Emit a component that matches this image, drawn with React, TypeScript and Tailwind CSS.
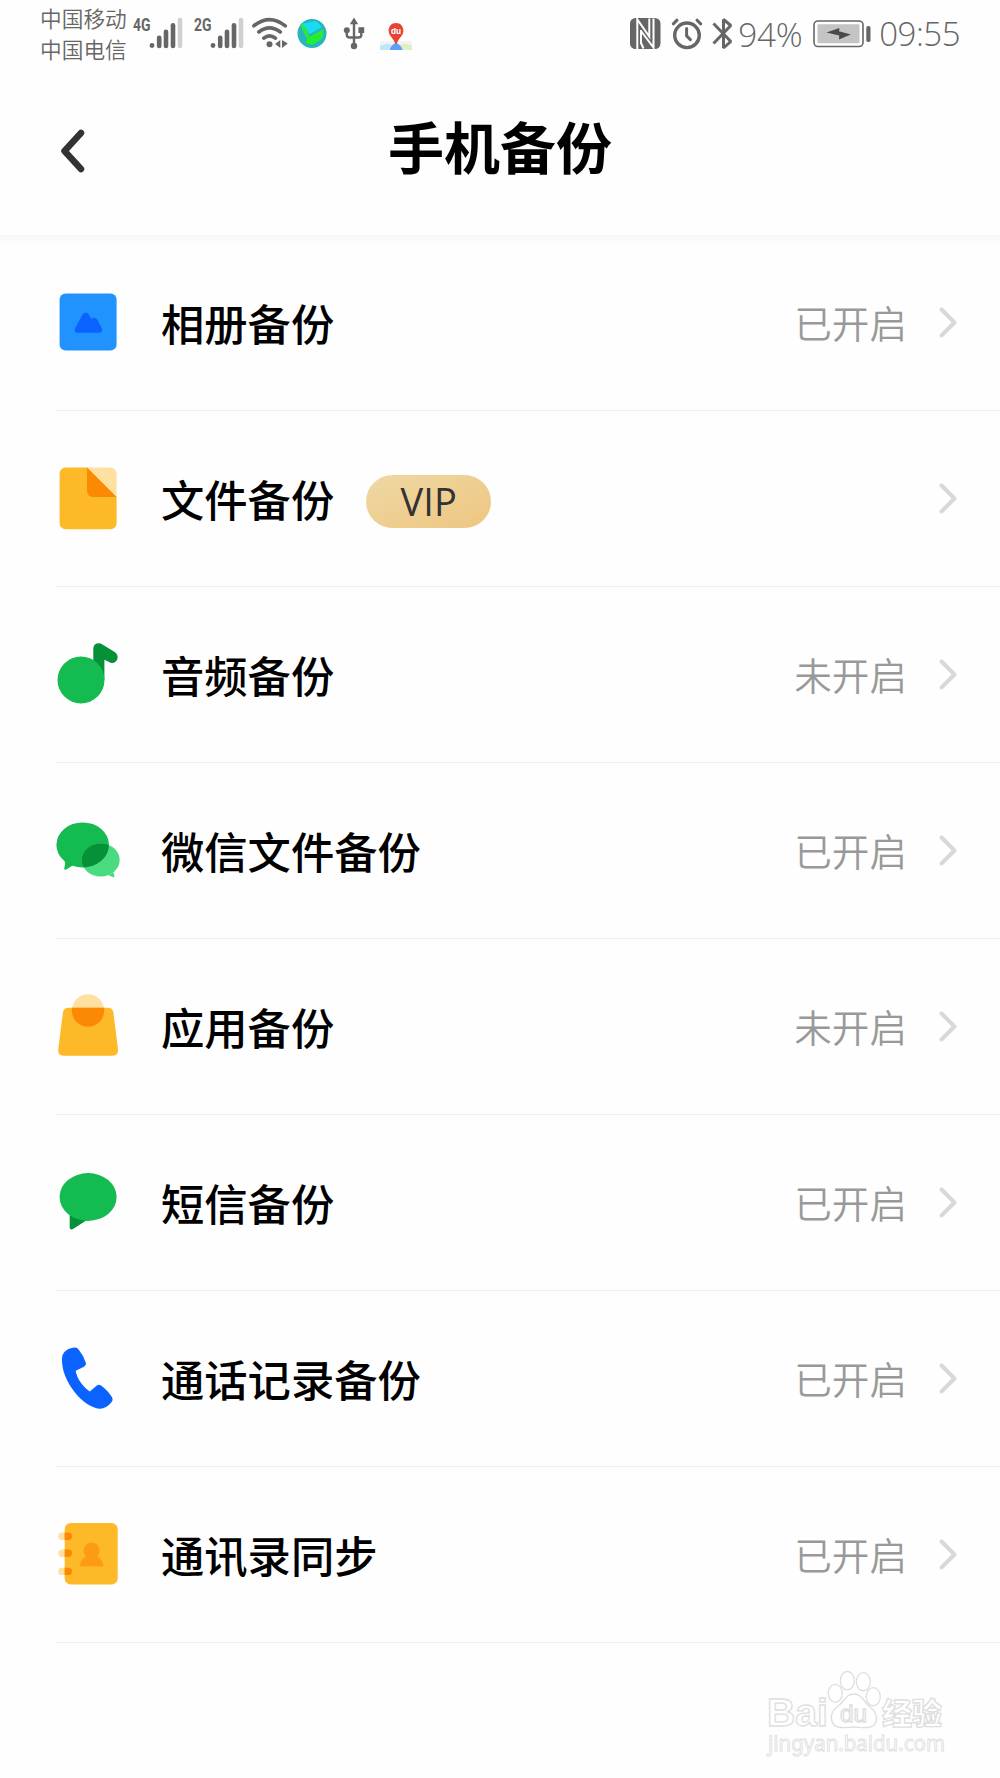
import type { ReactNode } from 'react';

type BackupItem = {
  label: string;
  status?: string;
  vip?: boolean;
  icon: ReactNode;
};

function ItemIcon({ children }: { children: ReactNode }) {
  return (
    <svg viewBox="0 0 64 65" className="h-[65px] w-16 shrink-0">
      {children}
    </svg>
  );
}

const ITEMS: BackupItem[] = [
  {
    label: '相册备份',
    status: '已开启',
    icon: (
      <ItemIcon>
        <rect x="3.6" y="3.6" width="57" height="57" rx="6" fill="#2093FF" />
        <path d="M26.6 24.6Q29.7 20.6 32.8 24.6L35.4 29.2Q38.4 26.2 41.2 29.4L45.8 38.6Q47 42.7 43.6 42.7H21.2Q17.8 42.7 19 38.6Z" fill="#0A62FF" />
      </ItemIcon>
    ),
  },
  {
    label: '文件备份',
    vip: true,
    icon: (
      <ItemIcon>
        <path d="M31 1.4H54.6a6 6 0 0 1 6 6V31Z" fill="#FEE0A0" />
        <path d="M9.6 1.4H31L60.6 31V57.3a6 6 0 0 1-6 6H9.6a6 6 0 0 1-6-6V7.4a6 6 0 0 1 6-6Z" fill="#FDB928" />
        <path d="M31 1.4V25a6 6 0 0 0 6 6H60.6Z" fill="#FC8904" />
      </ItemIcon>
    ),
  },
  {
    label: '音频备份',
    status: '未开启',
    icon: (
      <ItemIcon>
        <path d="M37.3 30V6.5Q37.6 1.3 43 1.3Q44.6 1.4 46 2.2L58.7 10Q62.5 12.8 61.4 17Q59.3 21.8 54.6 20.7L48.4 17.8V38Z" fill="#059137" />
        <circle cx="25" cy="38" r="23.5" fill="#14BB50" />
      </ItemIcon>
    ),
  },
  {
    label: '微信文件备份',
    status: '已开启',
    icon: (
      <ItemIcon>
        <clipPath id="bubble">
          <ellipse cx="26.7" cy="26.9" rx="26.3" ry="22.5" />
        </clipPath>
        <path d="M8 41L9.3 45.5L8.2 50.5Q8.4 52.4 10.2 51.4L17.5 47Z" fill="#14BB50" />
        <ellipse cx="26.7" cy="26.9" rx="26.3" ry="22.5" fill="#14BB50" />
        <path d="M52 57L57.2 59.2Q58.8 59.6 58.4 58L57.6 54.5Z" fill="#4ADA80" />
        <ellipse cx="44.7" cy="42" rx="19" ry="16.5" fill="#4ADA80" />
        <ellipse cx="44.7" cy="42" rx="19" ry="16.5" fill="#059137" clipPath="url(#bubble)" />
      </ItemIcon>
    ),
  },
  {
    label: '应用备份',
    status: '未开启',
    icon: (
      <ItemIcon>
        <clipPath id="bag">
          <rect x="0" y="13.7" width="64" height="40" />
        </clipPath>
        <circle cx="32" cy="16.5" r="16.2" fill="#FEE0A0" />
        <path d="M12.5 13.7H51.8Q56.8 13.7 57.4 18.7L62 55.5Q62.4 61.7 56.2 61.7H8Q1.7 61.7 2.2 55.5L6.9 18.7Q7.5 13.7 12.5 13.7Z" fill="#FDB928" />
        <circle cx="32" cy="16.5" r="16.2" fill="#FC8904" clipPath="url(#bag)" />
      </ItemIcon>
    ),
  },
  {
    label: '短信备份',
    status: '已开启',
    icon: (
      <ItemIcon>
        <path d="M13.7 42V57.2Q14 60.4 17 58.9L31 50Z" fill="#059137" />
        <ellipse cx="32.1" cy="27" rx="28.5" ry="23.9" fill="#14BB50" />
      </ItemIcon>
    ),
  },
  {
    label: '通话记录备份',
    status: '已开启',
    icon: (
      <ItemIcon>
        <path
          d="M6.4 9.5C8 4.8 13.5 1.5 19 1.4Q21.4 1.6 22.6 3.4Q27.8 9.6 30 17.3Q30.2 19.6 28 20.8L19.7 24.7C20.7 32 26.6 40.6 33.8 45.5L40.3 39.9Q42.7 38 45 39.5Q52 44.5 56.2 51.6Q57.1 53.6 55.8 55.8C52.8 60 48.2 62.8 43.6 62.7C27 61.5 5 35 6 12.5Z"
          fill="#0A62FF"
        />
      </ItemIcon>
    ),
  },
  {
    label: '通讯录同步',
    status: '已开启',
    icon: (
      <ItemIcon>
        <clipPath id="book">
          <rect x="8.7" y="1" width="53" height="61.4" />
        </clipPath>
        {[14.3, 31.3, 49.4].map((y) => (
          <rect key={y} x="2.3" y={y - 3.7} width="13.7" height="7.4" rx="3.7" fill="#FEE0A0" />
        ))}
        <rect x="8.7" y="1" width="53" height="61.4" rx="6" fill="#FDB928" />
        {[14.3, 31.3, 49.4].map((y) => (
          <rect key={y} x="2.3" y={y - 3.7} width="13.7" height="7.4" rx="3.7" fill="#FC8904" clipPath="url(#book)" />
        ))}
        <circle cx="35.6" cy="28.5" r="8" fill="#FD9C14" />
        <path d="M24 44.2Q24.6 36.4 31 34H40.2Q46.8 36.4 47.3 44.2Z" fill="#FD9C14" />
      </ItemIcon>
    ),
  },
];

function Signal({ label }: { label: string }) {
  return (
    <svg viewBox="0 0 52 34" className="h-[34px] w-[52px] shrink-0" fill="#666">
      <text x="0" y="15" fontSize="18.5" fontWeight="700" textLength="17.5" lengthAdjust="spacingAndGlyphs" fontFamily="Roboto, sans-serif">
        {label}
      </text>
      <circle cx="19" cy="29.5" r="2.4" />
      <rect x="23.9" y="19.5" width="4.6" height="12.8" rx="2.3" />
      <rect x="30.7" y="13.5" width="4.6" height="18.8" rx="2.3" />
      <rect x="37.7" y="7" width="4.6" height="25.3" rx="2.3" />
      <rect x="44.7" y="1.7" width="4.6" height="30.6" rx="2.3" fill="#D0D0D0" />
    </svg>
  );
}

function StatusBar() {
  return (
    <div className="flex h-[68px] items-start pr-[40px] pl-10 text-[#666]">
      <div className="mt-[3px] w-[93px] shrink-0 text-[21.7px] leading-[30.5px] font-[350] whitespace-nowrap">
        <div>中国移动</div>
        <div>中国电信</div>
      </div>
      <div className="mt-4 flex">
        <Signal label="4G" />
        <div className="ml-[9px] flex">
          <Signal label="2G" />
        </div>
        {/* wifi */}
        <svg viewBox="0 0 38 34" className="ml-[5px] h-[34px] w-[38px]" fill="none" stroke="#666" strokeWidth="3.6" strokeLinecap="round">
          <path d="M2.8 9.8Q18.5-2.6 34.3 9.8M7.8 16Q18.5 7.6 29.3 16M12.8 22.2Q18.5 17.4 24.4 22.2" />
          <circle cx="18.5" cy="28.3" r="3" fill="#666" stroke="none" />
          <path d="M29.3 24V32L24.2 28ZM31 24V32L36.8 27.5Z" fill="#666" stroke="none" />
        </svg>
        {/* globe */}
        <svg viewBox="0 0 30 34" className="ml-[8px] h-[34px] w-[30px]">
          <circle cx="15" cy="17.4" r="14.5" fill="#27B4BE" />
          <path d="M4 8L19 5L25 11L13 18Z" fill="#18DDF2" />
          <path d="M3.5 8Q7 8 10.5 15L12.5 21L26 13Q27.5 18 24.5 23L16 28.5L9 27L10 22Q6 17 3.5 8Z" fill="#2BE83B" />
          <path d="M14 20L25 20L16 28.8L9 27.5Z" fill="#1FF02A" />
        </svg>
        {/* usb */}
        <svg viewBox="0 0 22 34" className="ml-[16px] h-[34px] w-[22px]" fill="#666">
          <path d="M11 1.6L15.2 8.2H6.8Z" />
          <circle cx="11" cy="30" r="3.2" />
          <circle cx="3.8" cy="14.2" r="3" />
          <rect x="15.4" y="11.2" width="5.8" height="5.8" />
          <path d="M11 7V29M3.8 15V19.2Q4 21.5 6.6 21.5H15.6Q18.2 21.5 18.3 19.2V15" fill="none" stroke="#666" strokeWidth="2.4" />
        </svg>
        {/* map pin */}
        <svg viewBox="0 0 34 34" className="ml-[14px] h-[34px] w-[34px]">
          <path d="M1 25H33V34H1Z" fill="#F3F4F2" />
          <path d="M1 34V30Q9 26 12.5 29L9 34Z" fill="#BFE6F8" />
          <path d="M24 34L21 29Q28 26 33 30V34Z" fill="#DDF0C4" />
          <path d="M10.5 34Q12 28.5 17 27Q22 28.5 23.5 34Z" fill="#5AA2F5" />
          <path d="M17 7C12.4 7 9.6 10.5 9.6 14.7C9.6 20 14.5 21.5 16.3 28H17.7C19.5 21.5 24.4 20 24.4 14.7C24.4 10.5 21.6 7 17 7Z" fill="#EA4335" />
          <text x="17" y="17.5" fontSize="8" fontWeight="700" fill="#fff" textAnchor="middle" fontFamily="Inter, sans-serif">
            du
          </text>
        </svg>
      </div>
      <div className="mt-4 ml-auto flex">
        {/* nfc */}
        <svg viewBox="0 0 32 34" className="h-[34px] w-8">
          <rect x="0" y="2" width="30.5" height="31" rx="5.5" fill="#666" />
          <path d="M7.3 33V3.5L19.3 20.5V2.5M11 15L23.5 31.5V2.5M11 14V27L13.5 32.5" fill="none" stroke="#fff" strokeWidth="2" />
        </svg>
        {/* alarm */}
        <svg viewBox="0 0 32 34" className="ml-[9px] h-[34px] w-8" fill="none" stroke="#666" strokeWidth="3.4" strokeLinecap="round">
          <circle cx="16" cy="19.3" r="12.3" />
          <path d="M2.3 7.8L6 4.2M29.7 7.8L26 4.2M15.6 12.5V19.8L19.4 23.6" strokeWidth="3" />
        </svg>
        {/* bluetooth */}
        <svg viewBox="0 0 22 34" className="ml-[9px] h-[34px] w-[22px]" fill="none" stroke="#666" strokeWidth="3" strokeLinejoin="bevel">
          <path d="M1.5 7.5L18.8 25.5L11.5 32V3.5L18.8 9.5L1.5 27.5" />
        </svg>
      </div>
      <span className="mt-[12px] ml-[4px] w-[75px] font-['Open_Sans',sans-serif] text-[33.3px] leading-[44px] font-light tracking-[-0.3px]">94%</span>
      <svg viewBox="0 0 60 34" className="mt-4 h-[34px] w-[60px] shrink-0">
        <rect x="1" y="5" width="49" height="25.5" rx="4" fill="#fff" stroke="#666" strokeWidth="1.6" />
        <rect x="4.5" y="8.2" width="42" height="19" rx="1" fill="#C4C4C4" />
        <path d="M13.5 16.5L26.5 12L26 15.2L37.8 18.5L26 23.5L26.2 19.5Z" fill="#4A4A4A" />
        <rect x="53.3" y="10" width="4.2" height="16" rx="1.8" fill="#666" />
      </svg>
      <span className="mt-[12px] ml-[6px] shrink-0 font-['Open_Sans',sans-serif] text-[33px] leading-[44px] font-light tracking-[-0.5px]">09:55</span>
    </div>
  );
}

function ItemRow({ item }: { item: BackupItem }) {
  return (
    <li className="flex h-44 items-center border-b border-[#EEEEEE] pr-[42px]">
      {item.icon}
      <span className="mb-px ml-[41px] text-[43.3px] font-medium text-black">{item.label}</span>
      {item.vip && (
        <span className="mt-[5px] ml-8 flex h-[53px] w-[125px] items-center justify-center rounded-full bg-linear-to-br from-[#EED8A4] to-[#EEC680] font-['Open_Sans',sans-serif] text-[38px] text-[#333]">
          VIP
        </span>
      )}
      <span className="ml-auto text-[37.6px] font-[350] text-[#999]">{item.status}</span>
      <svg viewBox="0 0 20 35" className="ml-[31px] h-[35px] w-5 shrink-0" fill="none" stroke="#D8D8D8" strokeWidth="4" strokeLinecap="round" strokeLinejoin="round">
        <path d="M3.5 4.5L16.5 17.5L3.5 30.5" />
      </svg>
    </li>
  );
}

function Watermark() {
  return (
    <svg viewBox="0 0 190 90" className="h-[90px] w-[190px]" fill="#fff" stroke="#DEDEDE" strokeWidth="1.3">
      <g fontFamily="'Liberation Sans', sans-serif" fontWeight="700">
        <text x="2" y="56" fontSize="39" textLength="61" lengthAdjust="spacingAndGlyphs">Bai</text>
        <ellipse cx="82.3" cy="10.7" rx="7" ry="9.2" />
        <ellipse cx="98.3" cy="11.7" rx="7" ry="9" />
        <ellipse cx="70.3" cy="23.3" rx="7" ry="9" />
        <ellipse cx="108.3" cy="26.7" rx="7" ry="9" />
        <path d="M89 24C97 24 99 32 105 37C113 43 115 57 102 57.5C96 58 94 57 89 57S82 58 76 57.5C64 57 64 43 72 37C79 32 81 24 89 24Z" />
        <text x="75" y="52" fontSize="24" fontWeight="400" textLength="27" lengthAdjust="spacingAndGlyphs">du</text>
        <text x="117" y="53.5" fontSize="30" textLength="60" fontFamily="'Noto Sans CJK SC', sans-serif" fontWeight="900">经验</text>
      </g>
      <text x="3" y="81" fontSize="21" strokeWidth="0.9" textLength="177" lengthAdjust="spacingAndGlyphs" fontFamily="'Noto Sans', sans-serif">
        jingyan.baidu.com
      </text>
    </svg>
  );
}

export default function App() {
  return (
    <div className="flex h-[1778px] w-[1000px] flex-col overflow-hidden bg-[#FEFEFE] font-['Noto_Sans_CJK_SC',sans-serif]">
      <StatusBar />
      <header className="grid h-[167px] shrink-0 grid-cols-[1fr_auto_1fr] items-center pb-[7px] pl-[58px]">
        <svg viewBox="0 0 30 48" className="mt-[3px] h-12 w-[30px]" fill="none" stroke="#333" strokeWidth="6.5" strokeLinecap="round" strokeLinejoin="round">
          <path d="M23 7L6.5 25L23 43" />
        </svg>
        <h1 className="pr-[58px] pb-1.5 text-[56px] font-bold text-black">手机备份</h1>
      </header>
      <div className="-mb-[11px] h-[11px] shrink-0 bg-linear-to-b from-[#F7F7F7] to-[#FEFEFE]" />
      <ul className="pl-14">
        {ITEMS.map((item) => (
          <ItemRow key={item.label} item={item} />
        ))}
      </ul>
      <div className="mt-auto mr-[45px] mb-[18px] flex justify-end">
        <Watermark />
      </div>
    </div>
  );
}
